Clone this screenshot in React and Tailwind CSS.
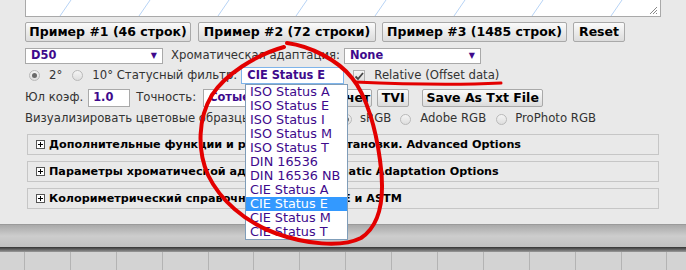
import React from 'react';

const INDIGO = 'text-[#3e0a8c]';

const statusOptions = [
  'ISO Status A',
  'ISO Status E',
  'ISO Status I',
  'ISO Status M',
  'ISO Status T',
  'DIN 16536',
  'DIN 16536 NB',
  'CIE Status A',
  'CIE Status E',
  'CIE Status M',
  'CIE Status T',
];

function Btn({ children, className = '' }) {
  return (
    <div
      className={`flex items-center justify-center rounded-[2px] border border-[#a9a9a9] bg-gradient-to-b from-[#fbfbfb] to-[#dcdcdc] font-bold text-black ${className}`}
    >
      {children}
    </div>
  );
}

function Select({ value, className = '', focus = false, arrow = true }) {
  return (
    <div
      className={`flex items-center justify-between bg-white pl-[5px] pr-[5px] text-[11.4px] font-bold ${INDIGO} border ${
        focus ? 'border-[#7eb4ea]' : 'border-[#a9a9a9]'
      } ${className}`}
    >
      <span className="whitespace-nowrap">{value}</span>
      {arrow && <span className="text-[8px] leading-none text-[#3e0a8c]">▼</span>}
    </div>
  );
}

function Radio({ checked = false }) {
  return (
    <div className="flex h-[11px] w-[11px] items-center justify-center rounded-full border border-[#b9b9b9] bg-gradient-to-b from-[#f4f4f4] to-[#dedede]">
      {checked && <div className="h-[5px] w-[5px] rounded-full bg-[#6a6a6a]" />}
    </div>
  );
}

function Plus() {
  return (
    <svg width="9" height="9" viewBox="0 0 9 9" className="shrink-0">
      <rect x="0.5" y="0.5" width="8" height="8" fill="#fff" stroke="#555" />
      <path d="M2 4.5h5M4.5 2v5" stroke="#000" />
    </svg>
  );
}

function Section({ title }) {
  return (
    <div className="flex h-[21px] w-[632px] items-center gap-[4px] border border-[#c6c6c6] pl-[8px] text-[11.2px] font-bold text-black">
      <Plus />
      <span className="whitespace-nowrap">{title}</span>
    </div>
  );
}

export default function App() {
  return (
    <div className="relative h-[270px] w-[686px] overflow-hidden bg-[#e9e9e9] font-['DejaVu_Sans',Verdana,sans-serif] text-[11.7px] leading-none text-[#333]">
      {/* Main form */}
      <div className="h-[225px] border-b border-[#9a9a9a] pl-[25px]">
        {/* textarea bottom */}
        <div className="relative h-[17px] w-[636px] border-x border-b border-[#a9a9a9] bg-white">
          <svg width="634" height="16" className="block">
            {[59, 138, 217, 295, 374, 453, 531, 610].map((x) => (
              <line key={x} x1={x - 25} y1="16" x2={x - 14} y2="0" stroke="#b7d3f5" strokeWidth="1" />
            ))}
            <path d="M627 14l4-4M630 14l1-1M624 14l7-7" stroke="#888" strokeWidth="1" />
          </svg>
        </div>

        {/* sample buttons */}
        <div className="mt-[5px] flex h-[20px] text-[12.5px]">
          <Btn className="w-[166px]">Пример #1 (46 строк)</Btn>
          <Btn className="ml-[7px] w-[178px]">Пример #2 (72 строки)</Btn>
          <Btn className="ml-[6px] w-[185px]">Пример #3 (1485 строк)</Btn>
          <Btn className="ml-[6px] w-[52px]">Reset</Btn>
        </div>

        {/* illuminant + adaptation */}
        <div className="mt-[6px] flex h-[16px] items-center">
          <Select value="D50" className="h-[16px] w-[138px]" />
          <span className="ml-[8px] whitespace-nowrap">Хроматическая адаптация:</span>
          <Select value="None" className="ml-[4px] h-[16px] w-[137px]" />
        </div>

        {/* observer + status */}
        <div className="mt-[3px] flex h-[17px] items-center">
          <div className="ml-[4px]"><Radio checked /></div>
          <span className="ml-[9px]">2°</span>
          <div className="ml-[10px]"><Radio /></div>
          <span className="ml-[9px] whitespace-nowrap">10° Статусный фильтр:</span>
          <Select value="CIE Status E" focus arrow={false} className="ml-[4px] h-[17px] w-[103px]" />
          <div className="ml-[9px] flex h-[12px] w-[12px] items-center justify-center border border-[#b0b0b0] bg-gradient-to-b from-[#f6f6f6] to-[#dcdcdc]">
            <svg width="10" height="10" viewBox="0 0 10 10">
              <path d="M1.5 5.5l2.5 2.5 5-6" fill="none" stroke="#444" strokeWidth="1.8" />
            </svg>
          </div>
          <span className="ml-[9px] whitespace-nowrap">Relative (Offset data)</span>
        </div>

        {/* coefficients */}
        <div className="mt-[5px] flex h-[18px] items-center">
          <span className="whitespace-nowrap">Юл коэф.</span>
          <div className={`ml-[5px] flex h-[18px] w-[42px] items-center border border-[#a9a9a9] bg-white pl-[4px] text-[11.4px] font-bold ${INDIGO}`}>
            1.0
          </div>
          <span className="ml-[6px] whitespace-nowrap">Точность:</span>
          <Select value="Сотые (0.01)" className="ml-[7px] h-[18px] w-[92px]" />
          <Btn className="ml-[5px] h-[18px] w-[72px] text-[12.5px]">Пересчет</Btn>
          <Btn className="ml-[5px] h-[18px] w-[32px] text-[12.5px]">TVI</Btn>
          <Btn className="ml-[13px] h-[18px] w-[121px] text-[12.5px]">Save As Txt File</Btn>
        </div>

        {/* visualise */}
        <div className="mt-[5px] flex h-[14px] items-center">
          <span className="w-[316px] whitespace-nowrap">Визуализировать цветовые образцы:</span>
          <Radio checked />
          <span className="ml-[8px]">sRGB</span>
          <div className="ml-[9px]"><Radio /></div>
          <span className="ml-[9px] whitespace-nowrap">Adobe RGB</span>
          <div className="ml-[10px]"><Radio /></div>
          <span className="ml-[8px] whitespace-nowrap">ProPhoto RGB</span>
        </div>

        {/* collapsible sections */}
        <div className="ml-[2px] mt-[8px] flex flex-col gap-[6px]">
          <Section title="Дополнительные функции и расширенные установки. Advanced Options" />
          <Section title="Параметры хроматической адаптации. Chromatic Adaptation Options" />
          <Section title="Колориметрический справочник. Таблицы CIE и ASTM" />
        </div>
      </div>

      {/* footer bar */}
      <div className="h-[22px] bg-gradient-to-b from-[#a9a9a9] via-[#cdcdcd] to-[#c0c0c0]" />
      <div className="h-[5px] bg-gradient-to-b from-[#333] to-[#9a9a9a]" />
      <div className="flex h-[18px] bg-[#d3d3d3] pl-[24px]">
        {Array.from({ length: 15 }).map((_, i) => (
          <div key={i} className="h-full w-[45.9px] shrink-0 border-l border-[#b3b3b3]" />
        ))}
      </div>

      {/* open dropdown list */}
      <div className="absolute left-[245px] top-[84px] w-[103px] border border-[#7f9db9] bg-white text-[12.8px]">
        {statusOptions.map((opt) => (
          <div
            key={opt}
            className={`flex h-[14px] items-center pl-[4px] whitespace-nowrap ${
              opt === 'CIE Status E' ? 'bg-[#3399ff] text-white' : INDIGO
            }`}
          >
            {opt}
          </div>
        ))}
      </div>

      {/* red hand annotation */}
      <svg width="686" height="270" className="pointer-events-none absolute left-0 top-0">
        <path
          d="M287 43 C310 46 338 60 352 78 C367 96 376 130 380 160 C385 195 381 225 361 238 C341 248 305 244 275 233 C245 222 220 200 208 175 C197 150 198 118 212 95 C225 75 255 55 284 47"
          fill="none"
          stroke="#e30000"
          strokeWidth="4"
          strokeLinecap="round"
        />
        <path d="M355 82 C400 84 460 85 501 83" fill="none" stroke="#e30000" strokeWidth="3" strokeLinecap="round" />
      </svg>
    </div>
  );
}
